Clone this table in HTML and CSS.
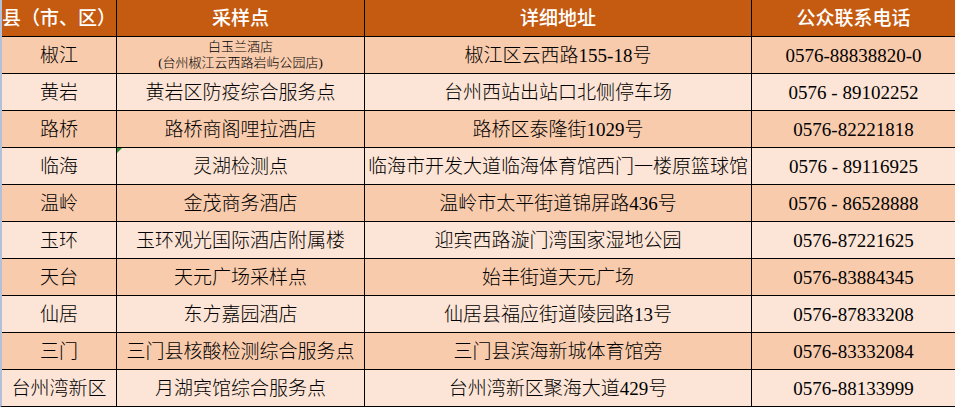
FILE: index.html
```html
<!DOCTYPE html>
<html lang="zh-CN">
<head>
<meta charset="utf-8">
<title>采样点</title>
<link rel="stylesheet" href="styles.css">
</head>
<body>
<div class="table">
  <div class="row head">
    <div class="cell">县（市、区）</div>
    <div class="cell">采样点</div>
    <div class="cell">详细地址</div>
    <div class="cell">公众联系电话</div>
  </div>
  <div class="row odd">
    <div class="cell">椒江</div>
    <div class="cell small"><span>白玉兰酒店</span><span>(台州椒江云西路岩屿公园店)</span></div>
    <div class="cell">椒江区云西路155-18号</div>
    <div class="cell">0576-88838820-0</div>
  </div>
  <div class="row even">
    <div class="cell">黄岩</div>
    <div class="cell">黄岩区防疫综合服务点</div>
    <div class="cell">台州西站出站口北侧停车场</div>
    <div class="cell">0576 - 89102252</div>
  </div>
  <div class="row odd">
    <div class="cell">路桥</div>
    <div class="cell">路桥商阁哩拉酒店</div>
    <div class="cell">路桥区泰隆街1029号</div>
    <div class="cell">0576-82221818</div>
  </div>
  <div class="row even">
    <div class="cell">临海</div>
    <div class="cell flagged">灵湖检测点</div>
    <div class="cell">临海市开发大道临海体育馆西门一楼原篮球馆</div>
    <div class="cell">0576 - 89116925</div>
  </div>
  <div class="row odd">
    <div class="cell">温岭</div>
    <div class="cell">金茂商务酒店</div>
    <div class="cell">温岭市太平街道锦屏路436号</div>
    <div class="cell">0576 - 86528888</div>
  </div>
  <div class="row even">
    <div class="cell">玉环</div>
    <div class="cell">玉环观光国际酒店附属楼</div>
    <div class="cell">迎宾西路漩门湾国家湿地公园</div>
    <div class="cell">0576-87221625</div>
  </div>
  <div class="row odd">
    <div class="cell">天台</div>
    <div class="cell">天元广场采样点</div>
    <div class="cell">始丰街道天元广场</div>
    <div class="cell">0576-83884345</div>
  </div>
  <div class="row even">
    <div class="cell">仙居</div>
    <div class="cell">东方嘉园酒店</div>
    <div class="cell">仙居县福应街道陵园路13号</div>
    <div class="cell">0576-87833208</div>
  </div>
  <div class="row odd">
    <div class="cell">三门</div>
    <div class="cell">三门县核酸检测综合服务点</div>
    <div class="cell">三门县滨海新城体育馆旁</div>
    <div class="cell">0576-83332084</div>
  </div>
  <div class="row even">
    <div class="cell">台州湾新区</div>
    <div class="cell">月湖宾馆综合服务点</div>
    <div class="cell">台州湾新区聚海大道429号</div>
    <div class="cell">0576-88133999</div>
  </div>
</div>
</body>
</html>
```

FILE: styles.css
```css
html, body {
  margin: 0;
  padding: 0;
  background: #ffffff;
  overflow: hidden;
}

.table {
  width: 953px;
  display: flex;
  flex-direction: column;
  gap: 1px;
  background: #000000;
  border-left: 2px solid #b3c0da;
  border-bottom: 1px solid #000000;
  font-family: "Liberation Serif", "Noto Sans CJK SC", serif;
  font-size: 19px;
  font-weight: 300;
  color: #000000;
}

.row {
  display: grid;
  grid-template-columns: 114px 247px 386px 1fr;
  gap: 1px;
  height: 36px;
}

.cell {
  display: flex;
  align-items: center;
  justify-content: center;
  white-space: nowrap;
  line-height: 1;
}

.head .cell {
  background: #c55a11;
  color: #ffffff;
  font-weight: 500;
}

.odd .cell {
  background: #f8cbad;
}

.even .cell {
  background: #fce4d6;
}

.small {
  flex-direction: column;
  font-size: 13px;
  line-height: 16px;
}

.flagged {
  position: relative;
}

.flagged::before {
  content: "";
  position: absolute;
  left: 0;
  top: 0;
  border-top: 5px solid #1f8b2c;
  border-right: 5px solid transparent;
}
```
